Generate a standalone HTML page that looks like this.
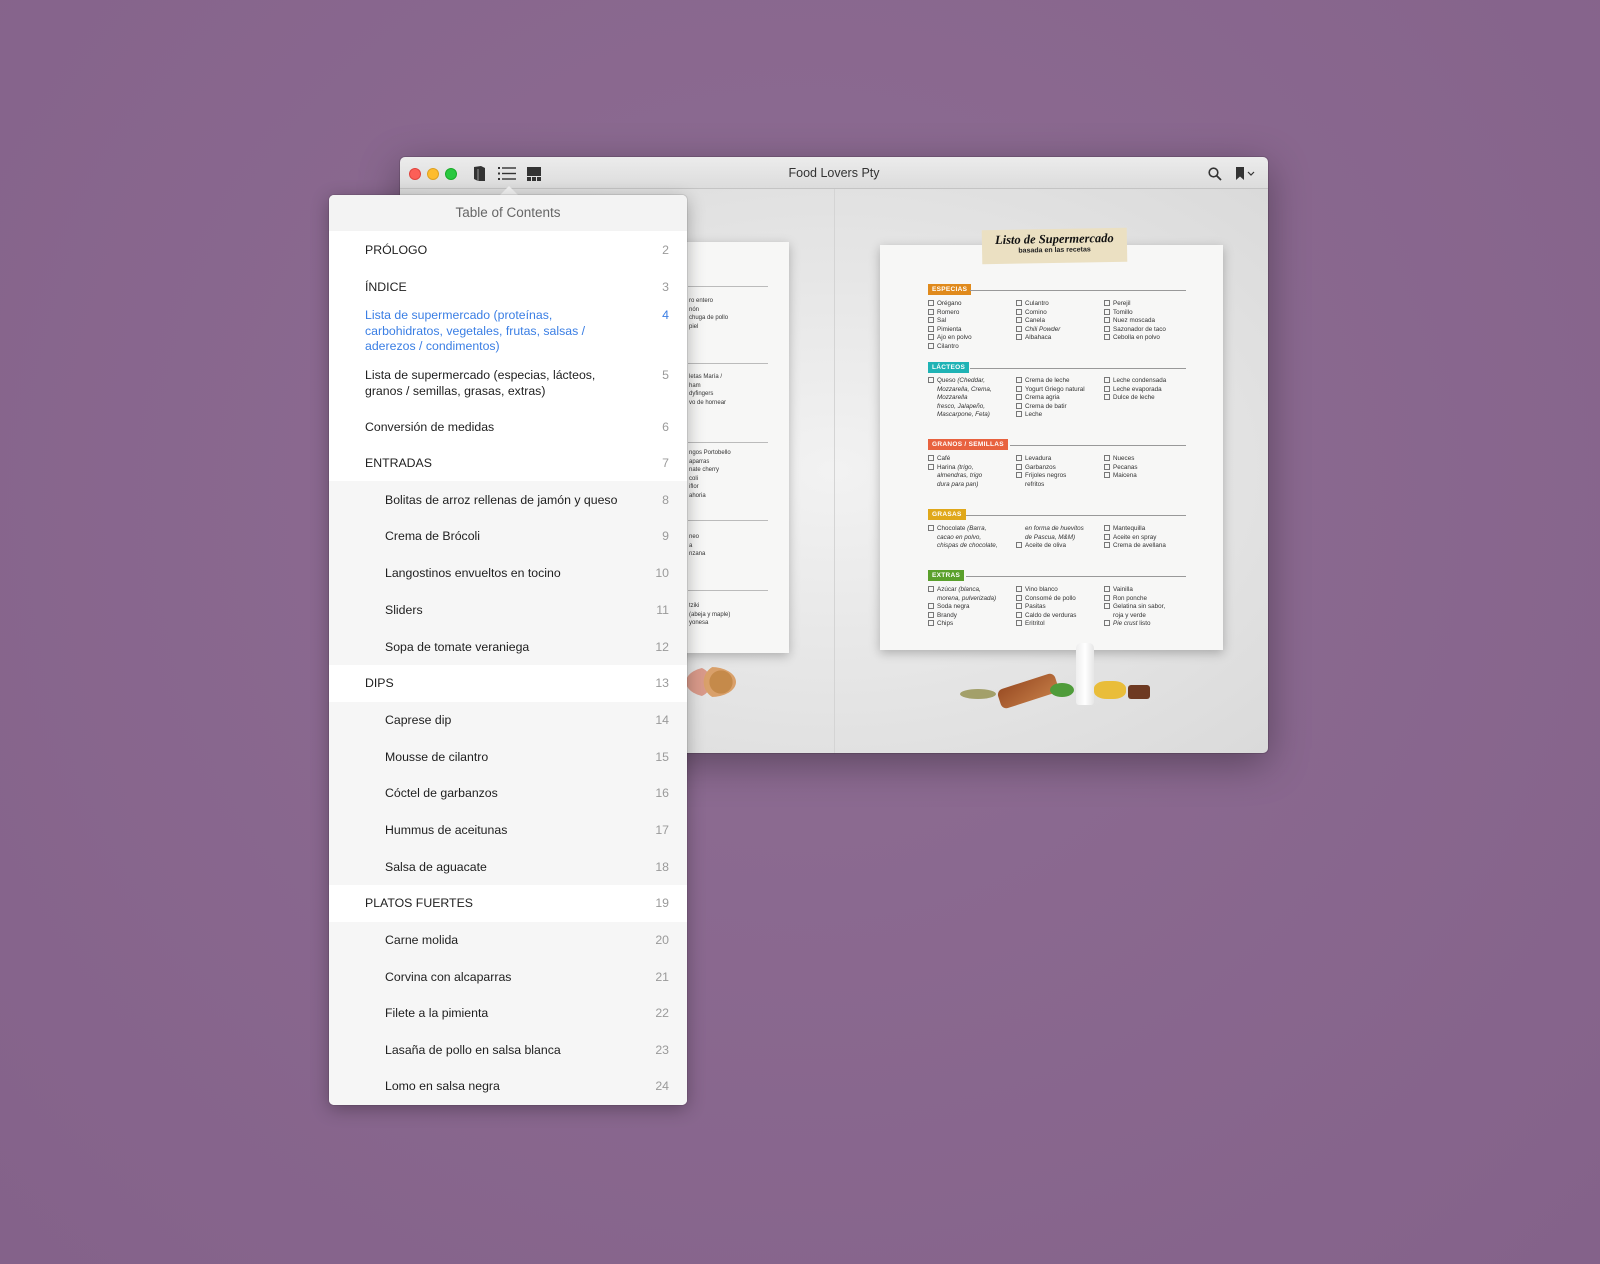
<!DOCTYPE html>
<html><head><meta charset="utf-8"><style>
*{margin:0;padding:0;box-sizing:border-box}
body{width:1600px;height:1264px;background:#8b6a8f;background:radial-gradient(ellipse at 50% 40%,#8e6d93,#84628a);font-family:"Liberation Sans",sans-serif;position:relative;overflow:hidden}
.win{position:absolute;left:400px;top:157px;width:868px;height:596px;border-radius:5px;overflow:hidden;box-shadow:0 10px 40px rgba(0,0,0,.35),0 0 0 1px rgba(0,0,0,.12)}
.tb{position:absolute;left:0;top:0;width:100%;height:32px;background:linear-gradient(#ececec,#dcdcdc);border-bottom:1px solid #c4c4c4}
.dot{position:absolute;top:11px;width:12px;height:12px;border-radius:50%}
.title{position:absolute;left:0;right:0;top:9px;text-align:center;font-size:12.5px;color:#333}
.content{position:absolute;left:0;top:32px;width:100%;height:564px;background:radial-gradient(ellipse at 50% 50%,#f2f2f2,#dadada)}
.div{position:absolute;left:434px;top:0;width:1px;height:564px;background:#d4d4d4}
.paper{position:absolute;background:#f7f7f6;box-shadow:0 3px 10px rgba(0,0,0,.25)}
.lab{position:absolute;color:#fff;font-size:6.5px;font-weight:bold;padding:2px 4px;letter-spacing:.3px}
.ln{position:absolute;height:1px;background:#999}
.col{position:absolute;font-size:6.3px;line-height:8.5px;color:#333;font-family:"Liberation Sans Narrow","Liberation Sans",sans-serif}
.col div:before{content:"";display:inline-block;width:4px;height:4px;border:1px solid #777;margin-right:3px;vertical-align:-1px}
.col .c:before{visibility:hidden}
.pop{position:absolute;left:329px;top:195px;width:358px;height:910px;background:#fff;border-radius:5px;box-shadow:0 4px 18px rgba(0,0,0,.3),0 0 0 1px rgba(0,0,0,.08);overflow:hidden}
.hd{position:absolute;left:0;top:0;width:100%;height:36px;background:#f3f3f3;text-align:center;font-size:13.5px;color:#666;line-height:36px}
.band{position:absolute;left:0;width:100%;background:#f6f6f6}
.r{position:absolute;left:36px;font-size:12.3px;color:#1e1e1e;line-height:15.5px}
.r.s{left:56px}
.n{position:absolute;right:18px;font-size:12.3px;color:#9a9a9a;text-align:right;line-height:15.5px}
.blue{color:#3a7ee4}
.arrow{position:absolute;left:499px;top:186px;width:0;height:0;border-left:10px solid transparent;border-right:10px solid transparent;border-bottom:10px solid #f3f3f3}
</style></head><body>
<div class="win">
 <div class="tb">
  <div class="dot" style="left:9px;background:#fc5f57;border:1px solid #e0443e"></div>
  <div class="dot" style="left:27px;background:#fdbc2e;border:1px solid #dea123"></div>
  <div class="dot" style="left:45px;background:#29c840;border:1px solid #1aab29"></div>
  <svg style="position:absolute;left:73px;top:8px" width="14" height="17" viewBox="0 0 14 17"><path d="M1 2 L8 1 L12 3 L12 16 L5 16 L1 14 Z" fill="#333"/><path d="M5 4 L5 16" stroke="#999" stroke-width="1"/></svg>
  <svg style="position:absolute;left:98px;top:10px" width="18" height="13" viewBox="0 0 18 13"><g fill="#333"><rect x="0" y="0" width="2" height="2"/><rect x="0" y="5.5" width="2" height="2"/><rect x="0" y="11" width="2" height="2"/><rect x="4" y=".3" width="14" height="1.4"/><rect x="4" y="5.8" width="14" height="1.4"/><rect x="4" y="11.3" width="14" height="1.4"/></g></svg>
  <svg style="position:absolute;left:127px;top:10px" width="14" height="14" viewBox="0 0 14 14"><rect x="0" y="0" width="14" height="9" fill="#333"/><rect x="0" y="10" width="4" height="4" fill="#333"/><rect x="5" y="10" width="4" height="4" fill="#333"/><rect x="10" y="10" width="4" height="4" fill="#333"/></svg>
  <div class="title">Food Lovers Pty</div>
  <svg style="position:absolute;left:808px;top:10px" width="14" height="14" viewBox="0 0 14 14"><circle cx="5.5" cy="5.5" r="4.3" fill="none" stroke="#333" stroke-width="1.6"/><path d="M8.7 8.7 L13 13" stroke="#333" stroke-width="1.8"/></svg>
  <svg style="position:absolute;left:836px;top:10px" width="22" height="13" viewBox="0 0 22 13"><path d="M0 0 H8 V13 L4 9.5 L0 13 Z" fill="#333"/><path d="M12 5 L15 8 L18 5" fill="none" stroke="#333" stroke-width="1.2"/></svg>
 </div>
 <div class="content">
  <div class="div"></div>
  <div class="paper" style="left:190px;top:53px;width:199px;height:411px"></div>
  <div class="ln" style="left:288px;top:97px;width:80px;background:#bbb"></div>
  <div class="col" style="left:280px;top:108px;font-size:6px"><div class="c">ro entero</div><div class="c">nón</div><div class="c">chuga de pollo</div><div class="c">piel</div></div>
  <div class="ln" style="left:288px;top:174px;width:80px;background:#bbb"></div>
  <div class="col" style="left:280px;top:184px;font-size:6px"><div class="c">letas María /</div><div class="c">ham</div><div class="c">dyfingers</div><div class="c">vo de hornear</div></div>
  <div class="ln" style="left:288px;top:253px;width:80px;background:#bbb"></div>
  <div class="col" style="left:280px;top:260px;font-size:6px"><div class="c">ngos Portobello</div><div class="c">aparras</div><div class="c">nate cherry</div><div class="c">coli</div><div class="c">iflor</div><div class="c">ahoria</div></div>
  <div class="ln" style="left:288px;top:331px;width:80px;background:#bbb"></div>
  <div class="col" style="left:280px;top:344px;font-size:6px"><div class="c">neo</div><div class="c">a</div><div class="c">nzana</div></div>
  <div class="ln" style="left:288px;top:401px;width:80px;background:#bbb"></div>
  <div class="col" style="left:280px;top:413px;font-size:6px"><div class="c">tziki</div><div class="c">(abeja y maple)</div><div class="c">yonesa</div></div>
  <div style="position:absolute;left:286px;top:478px;width:50px;height:30px;border-radius:50%;background:radial-gradient(circle at 70% 50%,#c58a4a 0 30%,#d9a06a 31% 45%,transparent 46%),radial-gradient(circle at 20% 50%,#d99a8a 0 35%,transparent 36%)"></div>

  <div class="paper" style="left:480px;top:56px;width:343px;height:405px"></div>
  <div style="position:absolute;left:582px;top:40px;width:145px;height:34px;background:#ebe0c2;transform:rotate(-1deg);text-align:center">
   <div style="font-family:'Liberation Serif',serif;font-style:italic;font-size:12.5px;font-weight:bold;color:#111;margin-top:3px">Listo de Supermercado</div>
   <div style="font-size:7px;font-weight:bold;color:#222">basada en las recetas</div></div>

  <div class="lab" style="left:528px;top:95px;background:#e08a1c">ESPECIAS</div>
  <div class="ln" style="left:570px;top:101px;width:216px"></div>
  <div class="col" style="left:528px;top:111px"><div>Orégano</div><div>Romero</div><div>Sal</div><div>Pimienta</div><div>Ajo en polvo</div><div>Cilantro</div></div>
  <div class="col" style="left:616px;top:111px"><div>Culantro</div><div>Comino</div><div>Canela</div><div><i>Chili Powder</i></div><div>Albahaca</div></div>
  <div class="col" style="left:704px;top:111px"><div>Perejil</div><div>Tomillo</div><div>Nuez moscada</div><div>Sazonador de taco</div><div>Cebolla en polvo</div></div>

  <div class="lab" style="left:528px;top:173px;background:#1fb3b5">LÁCTEOS</div>
  <div class="ln" style="left:570px;top:179px;width:216px"></div>
  <div class="col" style="left:528px;top:188px"><div>Queso <i>(Cheddar,</i></div><div class="c"><i>Mozzarella, Crema,</i></div><div class="c"><i>Mozzarella</i></div><div class="c"><i>fresco, Jalapeño,</i></div><div class="c"><i>Mascarpone, Feta)</i></div></div>
  <div class="col" style="left:616px;top:188px"><div>Crema de leche</div><div>Yogurt Griego natural</div><div>Crema agria</div><div>Crema de batir</div><div>Leche</div></div>
  <div class="col" style="left:704px;top:188px"><div>Leche condensada</div><div>Leche evaporada</div><div>Dulce de leche</div></div>

  <div class="lab" style="left:528px;top:250px;background:#e8623f">GRANOS / SEMILLAS</div>
  <div class="ln" style="left:610px;top:256px;width:176px"></div>
  <div class="col" style="left:528px;top:266px"><div>Café</div><div>Harina <i>(trigo,</i></div><div class="c"><i>almendras, trigo</i></div><div class="c"><i>dura para pan)</i></div></div>
  <div class="col" style="left:616px;top:266px"><div>Levadura</div><div>Garbanzos</div><div>Frijoles negros</div><div class="c">refritos</div></div>
  <div class="col" style="left:704px;top:266px"><div>Nueces</div><div>Pecanas</div><div>Maicena</div></div>

  <div class="lab" style="left:528px;top:320px;background:#e0a81a">GRASAS</div>
  <div class="ln" style="left:566px;top:326px;width:220px"></div>
  <div class="col" style="left:528px;top:336px"><div>Chocolate <i>(Barra,</i></div><div class="c"><i>cacao en polvo,</i></div><div class="c"><i>chispas de chocolate,</i></div></div>
  <div class="col" style="left:616px;top:336px"><div class="c"><i>en forma de huevitos</i></div><div class="c"><i>de Pascua, M&amp;M)</i></div><div>Aceite de oliva</div></div>
  <div class="col" style="left:704px;top:336px"><div>Mantequilla</div><div>Aceite en spray</div><div>Crema de avellana</div></div>

  <div class="lab" style="left:528px;top:381px;background:#5aa02c">EXTRAS</div>
  <div class="ln" style="left:566px;top:387px;width:220px"></div>
  <div class="col" style="left:528px;top:397px"><div>Azúcar <i>(blanca,</i></div><div class="c"><i>morena, pulverizada)</i></div><div>Soda negra</div><div>Brandy</div><div>Chips</div></div>
  <div class="col" style="left:616px;top:397px"><div>Vino blanco</div><div>Consomé de pollo</div><div>Pasitas</div><div>Caldo de verduras</div><div>Eritritol</div></div>
  <div class="col" style="left:704px;top:397px"><div>Vainilla</div><div>Ron ponche</div><div>Gelatina sin sabor,</div><div class="c">roja y verde</div><div><i>Pie crust</i> listo</div></div>

  <div style="position:absolute;left:676px;top:454px;width:18px;height:62px;background:linear-gradient(90deg,#eee,#fff,#e6e6e6);border-radius:5px 5px 3px 3px"></div>
  <div style="position:absolute;left:598px;top:492px;width:60px;height:20px;background:linear-gradient(160deg,#9b4e25,#c27a45);border-radius:6px;transform:rotate(-18deg)"></div>
  <div style="position:absolute;left:560px;top:500px;width:36px;height:10px;background:#a3a06a;border-radius:50%"></div>
  <div style="position:absolute;left:650px;top:494px;width:24px;height:14px;background:#4f9c3a;border-radius:50%"></div>
  <div style="position:absolute;left:694px;top:492px;width:32px;height:18px;background:#e9bd3a;border-radius:40%"></div>
  <div style="position:absolute;left:728px;top:496px;width:22px;height:14px;background:#6e3a22;border-radius:3px"></div>
  <div style="position:absolute;left:604px;top:568px;font-size:5px;color:#888;letter-spacing:.5px">FOODLOVERSpty</div>
  <div style="position:absolute;left:655px;top:566px;width:10px;height:10px;border-radius:50%;background:#888"></div>
  <div style="position:absolute;left:668px;top:568px;font-size:5px;color:#999">Carla Severino</div>
 </div>
</div>

<div class="arrow"></div>
<div class="pop">
 <div class="hd">Table of Contents</div>
 <div class="band" style="top:286px;height:184px"></div>
 <div class="band" style="top:507px;height:183px"></div>
 <div class="band" style="top:727px;height:183px"></div>
 <div class="r" style="top:48px">PRÓLOGO</div><div class="n" style="top:48px">2</div>
 <div class="r" style="top:85px">ÍNDICE</div><div class="n" style="top:85px">3</div>
 <div class="r blue" style="top:113px">Lista de supermercado (proteínas,<br>carbohidratos, vegetales, frutas, salsas /<br>aderezos / condimentos)</div><div class="n blue" style="top:113px">4</div>
 <div class="r" style="top:173px">Lista de supermercado (especias, lácteos,<br>granos / semillas, grasas, extras)</div><div class="n" style="top:173px">5</div>
 <div class="r" style="top:225px">Conversión de medidas</div><div class="n" style="top:225px">6</div>
 <div class="r" style="top:261px">ENTRADAS</div><div class="n" style="top:261px">7</div>
 <div class="r s" style="top:298px">Bolitas de arroz rellenas de jamón y queso</div><div class="n" style="top:298px">8</div>
 <div class="r s" style="top:334px">Crema de Brócoli</div><div class="n" style="top:334px">9</div>
 <div class="r s" style="top:371px">Langostinos envueltos en tocino</div><div class="n" style="top:371px">10</div>
 <div class="r s" style="top:408px">Sliders</div><div class="n" style="top:408px">11</div>
 <div class="r s" style="top:445px">Sopa de tomate veraniega</div><div class="n" style="top:445px">12</div>
 <div class="r" style="top:481px">DIPS</div><div class="n" style="top:481px">13</div>
 <div class="r s" style="top:518px">Caprese dip</div><div class="n" style="top:518px">14</div>
 <div class="r s" style="top:555px">Mousse de cilantro</div><div class="n" style="top:555px">15</div>
 <div class="r s" style="top:591px">Cóctel de garbanzos</div><div class="n" style="top:591px">16</div>
 <div class="r s" style="top:628px">Hummus de aceitunas</div><div class="n" style="top:628px">17</div>
 <div class="r s" style="top:665px">Salsa de aguacate</div><div class="n" style="top:665px">18</div>
 <div class="r" style="top:701px">PLATOS FUERTES</div><div class="n" style="top:701px">19</div>
 <div class="r s" style="top:738px">Carne molida</div><div class="n" style="top:738px">20</div>
 <div class="r s" style="top:775px">Corvina con alcaparras</div><div class="n" style="top:775px">21</div>
 <div class="r s" style="top:811px">Filete a la pimienta</div><div class="n" style="top:811px">22</div>
 <div class="r s" style="top:848px">Lasaña de pollo en salsa blanca</div><div class="n" style="top:848px">23</div>
 <div class="r s" style="top:884px">Lomo en salsa negra</div><div class="n" style="top:884px">24</div>
</div>
</body></html>
